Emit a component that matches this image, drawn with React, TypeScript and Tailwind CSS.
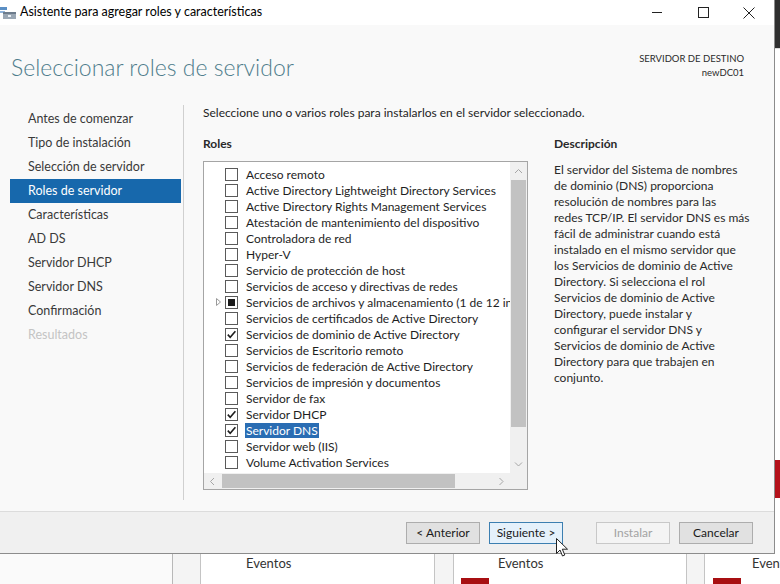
import React from 'react'

type Role = {
  label: string
  state?: 'checked' | 'partial'
  expandable?: boolean
  selected?: boolean
}

const navItems = [
  'Antes de comenzar',
  'Tipo de instalación',
  'Selección de servidor',
  'Roles de servidor',
  'Características',
  'AD DS',
  'Servidor DHCP',
  'Servidor DNS',
  'Confirmación',
  'Resultados',
]

const roles: Role[] = [
  { label: 'Acceso remoto' },
  { label: 'Active Directory Lightweight Directory Services' },
  { label: 'Active Directory Rights Management Services' },
  { label: 'Atestación de mantenimiento del dispositivo' },
  { label: 'Controladora de red' },
  { label: 'Hyper-V' },
  { label: 'Servicio de protección de host' },
  { label: 'Servicios de acceso y directivas de redes' },
  { label: 'Servicios de archivos y almacenamiento (1 de 12 instalados)', state: 'partial', expandable: true },
  { label: 'Servicios de certificados de Active Directory' },
  { label: 'Servicios de dominio de Active Directory', state: 'checked' },
  { label: 'Servicios de Escritorio remoto' },
  { label: 'Servicios de federación de Active Directory' },
  { label: 'Servicios de impresión y documentos' },
  { label: 'Servidor de fax' },
  { label: 'Servidor DHCP', state: 'checked' },
  { label: 'Servidor DNS', state: 'checked', selected: true },
  { label: 'Servidor web (IIS)' },
  { label: 'Volume Activation Services' },
]

const description = [
  'El servidor del Sistema de nombres',
  'de dominio (DNS) proporciona',
  'resolución de nombres para las',
  'redes TCP/IP. El servidor DNS es más',
  'fácil de administrar cuando está',
  'instalado en el mismo servidor que',
  'los Servicios de dominio de Active',
  'Directory. Si selecciona el rol',
  'Servicios de dominio de Active',
  'Directory, puede instalar y',
  'configurar el servidor DNS y',
  'Servicios de dominio de Active',
  'Directory para que trabajen en',
  'conjunto.',
]

function Checkbox({ state }: { state?: Role['state'] }) {
  return (
    <div className="w-[13px] h-[13px] border border-[#5a5a5a] bg-white flex items-center justify-center shrink-0">
      {state === 'checked' && (
        <svg width="11" height="11" viewBox="0 0 11 11">
          <path d="M1.8 5.6 L4.2 8.2 L9.4 2.2" fill="none" stroke="#1c1c1c" strokeWidth="1.6" />
        </svg>
      )}
      {state === 'partial' && <div className="w-[7px] h-[7px] bg-[#1c1c1c]" />}
    </div>
  )
}

function Chevron({ dir }: { dir: 'up' | 'down' | 'left' | 'right' }) {
  const d = {
    up: 'M1 5 L4.5 1.5 L8 5',
    down: 'M1 1.5 L4.5 5 L8 1.5',
    left: 'M5 1 L1.5 4.5 L5 8',
    right: 'M1.5 1 L5 4.5 L1.5 8',
  }[dir]
  const horiz = dir === 'up' || dir === 'down'
  return (
    <svg width={horiz ? 9 : 7} height={horiz ? 7 : 9} viewBox={horiz ? '0 0 9 7' : '0 0 7 9'}>
      <path d={d} fill="none" stroke="#a6a6a6" strokeWidth="1" />
    </svg>
  )
}

function WizardButton({
  children,
  variant = 'default',
}: {
  children: React.ReactNode
  variant?: 'default' | 'focus' | 'disabled'
}) {
  const styles = {
    default: 'bg-[#e1e1e1] border-[#adadad] text-[#1a1a1a]',
    focus: 'bg-[#e5f1fb] border-[#3c7fb1] text-[#1a1a1a]',
    disabled: 'bg-[#f4f4f4] border-[#c8c8c8] text-[#a3a3a3]',
  }[variant]
  return (
    <div className={`w-[74px] h-[22px] border flex items-center justify-center text-[12px] ${styles}`}>
      {children}
    </div>
  )
}

export default function App() {
  return (
    <div className="relative w-[780px] h-[584px] overflow-hidden flex flex-col bg-white font-['Lato','Open_Sans',sans-serif] text-[#1e1e1e]">
      <div className="flex h-[554px] shrink-0">
        {/* Wizard window */}
        <div className="w-[775px] shrink-0 flex flex-col border-r border-b border-[#8c8c8c] bg-[#f9f9f9]">
          {/* Title bar */}
          <div className="h-[25px] bg-white flex items-center shrink-0">
            <svg width="17" height="14" viewBox="0 0 17 14">
              <rect x="0" y="1" width="7" height="3" fill="#5b8fc4" />
              <rect x="0" y="5" width="5" height="2" fill="#8fb4dc" />
              <rect x="3" y="6" width="13" height="7" fill="#9aa7b4" />
              <rect x="3" y="6" width="13" height="2" fill="#6d7c8c" />
              <rect x="8" y="9" width="3" height="2" fill="#e8eef4" />
            </svg>
            <span className="ml-[3px] text-[12.5px] text-black">Asistente para agregar roles y características</span>
            <div className="flex-1" />
            <div className="flex items-center">
              <div className="w-[46px] h-[25px] flex items-center justify-center">
                <div className="w-[10px] h-px bg-[#222]" />
              </div>
              <div className="w-[46px] h-[25px] flex items-center justify-center">
                <div className="w-[11px] h-[11px] border border-[#222]" />
              </div>
              <div className="w-[46px] h-[25px] flex items-center justify-center mr-[2px]">
                <svg width="12" height="12" viewBox="0 0 12 12">
                  <path d="M0.5 0.5 L11.5 11.5 M11.5 0.5 L0.5 11.5" stroke="#222" strokeWidth="1" />
                </svg>
              </div>
            </div>
          </div>

          {/* Header */}
          <div className="h-[75px] flex justify-between shrink-0">
            <div className="pl-[11px] pt-[27px] text-[23px] leading-[30px] font-light text-[#4f7d8c]">
              Seleccionar roles de servidor
            </div>
            <div className="pr-[30px] pt-[27px] text-right text-[9.5px] leading-[14px] text-[#2a2a2a]">
              <div>SERVIDOR DE DESTINO</div>
              <div>newDC01</div>
            </div>
          </div>

          {/* Main */}
          <div className="flex-1 flex min-h-0">
            <div className="w-[184px] shrink-0 pt-[5px] pb-[11px]">
              <div className="h-full border-r border-[#d0d0d0] pt-[2px]">
                {navItems.map((item) => {
                  const active = item === 'Roles de servidor'
                  const disabled = item === 'Resultados'
                  return (
                    <div
                      key={item}
                      className={`ml-[10px] mr-[2px] h-[24px] flex items-center pl-[18px] text-[12.5px] ${
                        active ? 'bg-[#1768ac] text-white' : disabled ? 'text-[#c4c4c4]' : 'text-[#3a3a3a]'
                      }`}
                    >
                      {item}
                    </div>
                  )
                })}
              </div>
            </div>

            <div className="flex-1 pl-[19px] pt-[5px] flex flex-col">
              <div className="h-[16px] leading-[16px] text-[12px]">
                Seleccione uno o varios roles para instalarlos en el servidor seleccionado.
              </div>
              <div className="flex mt-[15px] gap-[26px]">
                <div className="w-[325px] flex flex-col">
                  <div className="h-[16px] leading-[16px] text-[12px] font-bold text-[#2a2a2a]">Roles</div>
                  <div className="mt-[9px] h-[329px] border border-[#a5a5a5] bg-white flex flex-col">
                    <div className="flex flex-1 min-h-0">
                      <div className="flex-1 min-w-0 overflow-hidden pt-[4px]">
                        {roles.map((r) => (
                          <div key={r.label} className="h-[16px] flex items-center whitespace-nowrap">
                            <div className="w-[21px] h-[16px] flex items-center justify-end pr-[4px] shrink-0">
                              {r.expandable && (
                                <svg width="5" height="8" viewBox="0 0 5 8">
                                  <path d="M0.5 0.5 L4.5 4 L0.5 7.5 Z" fill="none" stroke="#9a9a9a" strokeWidth="1" />
                                </svg>
                              )}
                            </div>
                            <Checkbox state={r.state} />
                            <span
                              className={`ml-[7px] text-[12px] leading-[15px] px-px ${
                                r.selected ? 'bg-[#2a6db3] text-white' : 'text-[#1e1e1e]'
                              }`}
                            >
                              {r.label}
                            </span>
                          </div>
                        ))}
                      </div>
                      <div className="w-[17px] bg-[#f0f0f0] flex flex-col shrink-0">
                        <div className="h-[18px] flex items-center justify-center">
                          <Chevron dir="up" />
                        </div>
                        <div className="h-[247px] mx-[1px] bg-[#c2c2c2]" />
                        <div className="flex-1" />
                        <div className="h-[17px] flex items-center justify-center">
                          <Chevron dir="down" />
                        </div>
                      </div>
                    </div>
                    <div className="h-[16px] flex shrink-0">
                      <div className="flex-1 bg-[#f0f0f0] flex items-center">
                        <div className="w-[17px] flex justify-center">
                          <Chevron dir="left" />
                        </div>
                        <div className="w-[233px] h-[14px] ml-[1px] bg-[#c2c2c2]" />
                        <div className="flex-1" />
                        <div className="w-[17px] flex justify-center">
                          <Chevron dir="right" />
                        </div>
                      </div>
                      <div className="w-[17px] bg-[#f0f0f0]" />
                    </div>
                  </div>
                </div>

                <div className="flex flex-col">
                  <div className="h-[16px] leading-[16px] text-[12px] font-bold text-[#2a2a2a]">Descripción</div>
                  <div className="mt-[10px] text-[12px] leading-[16px] text-[#2a2a2a]">
                    {description.map((line) => (
                      <div key={line} className="whitespace-nowrap">
                        {line}
                      </div>
                    ))}
                  </div>
                </div>
              </div>
            </div>
          </div>

          {/* Footer */}
          <div className="h-[42px] shrink-0 border-t border-[#dcdcdc] bg-[#f0f0f0] flex pt-[10px] pr-[21px] justify-end">
            <div className="flex gap-[9px]">
              <WizardButton>&lt; Anterior</WizardButton>
              <WizardButton variant="focus">Siguiente &gt;</WizardButton>
            </div>
            <div className="flex gap-[9px] ml-[33px]">
              <WizardButton variant="disabled">Instalar</WizardButton>
              <WizardButton>Cancelar</WizardButton>
            </div>
          </div>
        </div>

        {/* Server Manager behind, right edge */}
        <div className="flex-1 flex flex-col">
          <div className="h-[48px] bg-[#2f2f2f]" />
          <div className="h-[412px] bg-white border-t border-[#dcdcdc]" />
          <div className="h-[38px] bg-[#b5121b]" />
          <div className="flex-1 bg-white" />
        </div>
      </div>

      {/* Server Manager behind, bottom edge */}
      <div className="flex-1 flex bg-[#f4f4f4] text-[13px] text-[#333]">
        <div className="w-[173px] shrink-0 bg-[#fafafa] border-r border-[#b8b8b8]" />
        <div className="w-[27px] shrink-0" />
        <div className="w-[235px] shrink-0 bg-white border-x border-[#c4c4c4] pl-[45px] flex flex-col">
          <div className="leading-[18px]">Eventos</div>
        </div>
        <div className="w-[18px] shrink-0" />
        <div className="w-[234px] shrink-0 bg-white border-x border-[#c4c4c4] flex flex-col">
          <div className="pl-[44px] leading-[18px]">Eventos</div>
          <div className="ml-[7px] mt-[6px] w-[28px] flex-1 bg-[#a80f12]" />
        </div>
        <div className="w-[17px] shrink-0" />
        <div className="flex-1 min-w-0 overflow-hidden bg-white border-l border-[#c4c4c4] flex flex-col">
          <div className="pl-[47px] leading-[18px] whitespace-nowrap">Eventos</div>
          <div className="ml-[8px] mt-[6px] w-[28px] flex-1 bg-[#a80f12]" />
        </div>
      </div>

      {/* Mouse pointer */}
      <svg width="13" height="20" viewBox="0 0 13 20" className="absolute left-[556px] top-[538px]">
        <path d="M0.5 0.5 L0.5 15.5 L4 12 L6.5 18 L8.8 17 L6.3 11.2 L11.5 11.2 Z" fill="white" stroke="#222" strokeWidth="1" />
      </svg>
    </div>
  )
}
